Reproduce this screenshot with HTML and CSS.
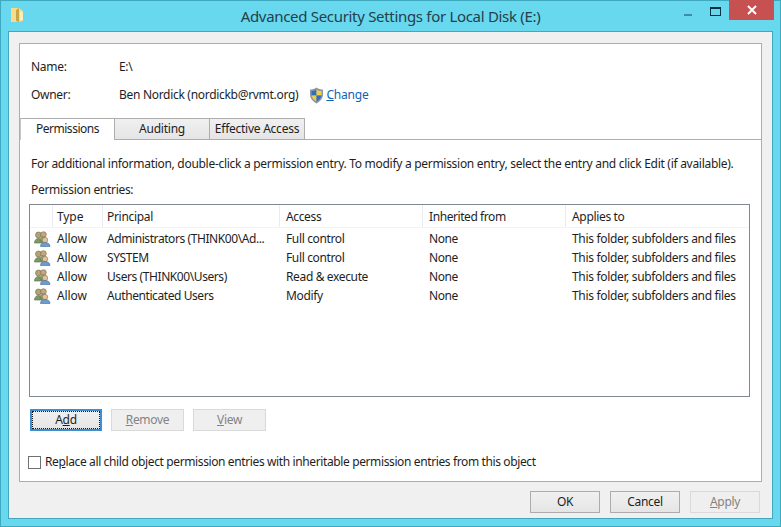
FILE: index.html
```html
<!DOCTYPE html>
<html lang="en">
<head>
<meta charset="utf-8">
<title>Advanced Security Settings for Local Disk (E:)</title>
<link rel="stylesheet" href="styles.css">
</head>
<body>
<div class="window">
  <header class="titlebar">
    <svg class="folder" width="14" height="16" viewBox="0 0 14 16"><path d="M1 1h8l4 3v10l-4 1H1z" fill="#f6dc8c"/><path d="M6 3l3-2v14l-3-1z" fill="#c9a545"/><path d="M10 5h3v8h-3z" fill="#fbeeb8"/></svg>
    <h1 class="title">Advanced Security Settings for Local Disk (E:)</h1>
    <div class="controls">
      <span class="min"></span>
      <span class="max"></span>
      <span class="close">
        <svg width="10" height="10" viewBox="0 0 10 10"><path d="M1 1l8 8M9 1l-8 8" stroke="#fff" stroke-width="2"/></svg>
      </span>
    </div>
  </header>
  <div class="client">
    <main class="panel">
      <div class="info">
        <div class="info-row"><span class="label">Name:</span><span>E:\</span></div>
        <div class="info-row">
          <span class="label">Owner:</span><span>Ben Nordick (nordickb@rvmt.org)</span>
          <svg class="shield" width="15" height="17" viewBox="0 0 15 17">
            <path d="M7.5 .5c2 1.500 4 2 6.500 2v5c0 4-3 7-6.500 9C4 14.500 1 11.500 1 7.500v-5c2.500 0 4.500-.5 6.500-2z" fill="#8a96a6"/>
            <path d="M7.500 2.500v6H2.500v-4.500c2 0 3.500-.5 5-1.500z" fill="#2d6fc4"/>
            <path d="M7.500 2.500c1.500 1 3 1.500 5 1.500v4.500h-5z" fill="#f2cf3c"/>
            <path d="M2.500 8.500h5v6c-2.500-1.500-4.500-3.500-5-6z" fill="#f2cf3c"/>
            <path d="M7.500 8.500h5c-.5 2.500-2.500 4.500-5 6z" fill="#2d6fc4"/>
          </svg>
          <a class="link" href="#"><u>C</u>hange</a>
        </div>
      </div>
      <nav class="tabs">
        <span class="tab active">Permissions</span>
        <span class="tab">Auditing</span>
        <span class="tab">Effective Access</span>
      </nav>
      <section class="body">
        <p class="help">For additional information, double-click a permission entry. To modify a permission entry, select the entry and click Edit (if available).</p>
        <p class="entries-label">Permission entries:</p>
        <div class="list">
          <div class="row head">
            <span class="c-icon"></span>
            <span class="c-type">Type</span>
            <span class="c-principal">Principal</span>
            <span class="c-access">Access</span>
            <span class="c-inherit">Inherited from</span>
            <span class="c-applies">Applies to</span>
          </div>
          <div class="row">
            <span class="c-icon"><svg class="users" width="17" height="16" viewBox="0 0 17 16"><use href="#users"/></svg></span>
            <span class="c-type">Allow</span><span class="c-principal">Administrators (THINK00\Ad...</span><span class="c-access">Full control</span><span class="c-inherit">None</span><span class="c-applies">This folder, subfolders and files</span>
          </div>
          <div class="row">
            <span class="c-icon"><svg class="users" width="17" height="16" viewBox="0 0 17 16"><use href="#users"/></svg></span>
            <span class="c-type">Allow</span><span class="c-principal">SYSTEM</span><span class="c-access">Full control</span><span class="c-inherit">None</span><span class="c-applies">This folder, subfolders and files</span>
          </div>
          <div class="row">
            <span class="c-icon"><svg class="users" width="17" height="16" viewBox="0 0 17 16"><use href="#users"/></svg></span>
            <span class="c-type">Allow</span><span class="c-principal">Users (THINK00\Users)</span><span class="c-access">Read &amp; execute</span><span class="c-inherit">None</span><span class="c-applies">This folder, subfolders and files</span>
          </div>
          <div class="row">
            <span class="c-icon"><svg class="users" width="17" height="16" viewBox="0 0 17 16"><use href="#users"/></svg></span>
            <span class="c-type">Allow</span><span class="c-principal">Authenticated Users</span><span class="c-access">Modify</span><span class="c-inherit">None</span><span class="c-applies">This folder, subfolders and files</span>
          </div>
        </div>
        <div class="list-actions">
          <button class="btn focus" type="button">A<u>d</u>d</button>
          <button class="btn disabled" type="button"><u>R</u>emove</button>
          <button class="btn disabled" type="button"><u>V</u>iew</button>
        </div>
        <label class="check"><span class="box"></span><span>Re<u>p</u>lace all child object permission entries with inheritable permission entries from this object</span></label>
      </section>
    </main>
    <footer class="footer">
      <button class="btn wide" type="button">OK</button>
      <button class="btn wide" type="button">Cancel</button>
      <button class="btn wide disabled" type="button"><u>A</u>pply</button>
    </footer>
  </div>
</div>
<svg class="defs" width="0" height="0">
  <defs>
    <g id="users">
      <circle cx="4.500" cy="4" r="3" fill="#b3a477" stroke="#6d6a3a" stroke-width=".6"/>
      <path d="M.5 12c0-3 2-4.500 4-4.500s4 1.500 4 4.500z" fill="#7d9a6d" stroke="#55683a" stroke-width=".6"/>
      <circle cx="9.500" cy="3.500" r="2.800" fill="#c4a87c" stroke="#7a6640" stroke-width=".6"/>
      <path d="M6 10c0-2.500 1.500-4 3.500-4s3 1.500 3 4z" fill="#8ea572" stroke="#60703c" stroke-width=".6"/>
      <circle cx="11" cy="9" r="2.700" fill="#e2c39a" stroke="#8a7250" stroke-width=".6"/>
      <path d="M6.500 15.500c0-3 2-4 4.500-4s5 1 5 4z" fill="#6f9dc9" stroke="#3f6a98" stroke-width=".6"/>
    </g>
  </defs>
</svg>
</body>
</html>
```
FILE: styles.css
```css
* { box-sizing: border-box; }
html, body { margin: 0; padding: 0; }
body {
  width: 781px;
  height: 527px;
  overflow: hidden;
  font-family: "Noto Sans", "Open Sans", sans-serif;
  font-size: 12px;
  line-height: 16px;
  color: #1e1e1e;
  letter-spacing: -0.3px;
}
.window {
  width: 781px;
  height: 527px;
  background: #68d8ef;
  border: 1px solid #3fa9c0;
  display: flex;
  flex-direction: column;
}
.titlebar {
  height: 30px;
  display: flex;
  align-items: center;
  position: relative;
  padding-left: 9px;
  flex: none;
}
.folder { margin-top: -2px; }
.title {
  position: absolute;
  left: 0;
  right: 0;
  top: 5px;
  margin: 0;
  text-align: center;
  font-size: 15px;
  font-weight: 400;
  line-height: 20px;
  color: #24404a;
  letter-spacing: -0.31px;
}
.controls {
  margin-left: auto;
  margin-right: 6px;
  align-self: flex-start;
  display: flex;
  align-items: flex-start;
}
.min {
  width: 8px;
  height: 2px;
  background: #3c8ea3;
  margin-top: 13px;
  margin-right: 18px;
}
.max {
  width: 11px;
  height: 9px;
  border: 1px solid #06323f;
  border-top-width: 2px;
  margin-top: 6px;
  margin-right: 8px;
}
.close {
  width: 45px;
  height: 20px;
  margin-top: -1px;
  background: #c75050;
  display: flex;
  align-items: center;
  justify-content: center;
}
.client {
  flex: 1;
  margin: 0 7px 7px;
  background: #f0f0f0;
  border: 1px solid #3fa9c0;
  padding: 11px 10px 0 10px;
  display: flex;
  flex-direction: column;
}
.panel {
  height: 439px;
  background: #fff;
  border: 1px solid #adadad;
  display: flex;
  flex-direction: column;
}
.info { padding: 15px 0 0 11px; height: 74px; }
.info-row { display: flex; align-items: center; height: 16px; margin-bottom: 12px; }
.label { width: 88px; }
.shield { margin-left: 11px; margin-right: 2px; }
.link { color: #0d63b3; text-decoration: none; letter-spacing: -0.2px; }
.link u { text-decoration: underline; }
.tabs { display: flex; height: 22px; border-bottom: 1px solid #adadad; flex: none; }
.tab {
  width: 95px;
  height: 21px;
  background: linear-gradient(#f0f0f0, #e5e5e5);
  border: 1px solid #adadad;
  border-left: none;
  border-bottom: none;
  text-align: center;
  line-height: 20px;
  letter-spacing: -0.22px;
}
.tab.active {
  background: #fff;
  height: 22px;
  border-left: 1px solid #c8c8c8;
  letter-spacing: -0.48px;
}
.tab:last-child { letter-spacing: -0.25px; }
.body { padding: 16px 0 0 11px; flex: 1; }
.help { margin: 0; height: 16px; white-space: nowrap; letter-spacing: -0.29px; }
.entries-label { margin: 10px 0 0 0; height: 16px; }
.list {
  margin: 6px 0 0 -2px;
  width: 721px;
  height: 193px;
  border: 1px solid #828790;
  background: #fff;
}
.row { display: flex; height: 19px; align-items: center; white-space: nowrap; }
.row.head { height: 23px; border-bottom: 1px solid #f0f3f8; margin-bottom: 1px; }
.row.head span { height: 22px; line-height: 24px; border-right: 1px solid #e8ecf2; }
.row.head span:last-child { border-right: none; }
.c-icon { width: 23px; flex: none; padding-left: 4px; display: flex; align-items: center; }
.c-type { width: 50px; flex: none; padding-left: 4px; letter-spacing: -0.1px; }
.c-principal { width: 177px; flex: none; padding-left: 4px; letter-spacing: -0.42px; }
.c-access { width: 143px; flex: none; padding-left: 6px; letter-spacing: -0.36px; }
.c-inherit { width: 143px; flex: none; padding-left: 6px; letter-spacing: -0.42px; }
.c-applies { flex: 1; padding-left: 6px; letter-spacing: -0.33px; }
.row.head .c-principal { letter-spacing: -0.3px; }
.list-actions { display: flex; gap: 9px; margin: 12px 0 0 -1px; }
.btn {
  width: 73px;
  height: 22px;
  padding: 0;
  font: inherit;
  letter-spacing: inherit;
  color: #1e1e1e;
  background: linear-gradient(#f0f0f0, #e5e5e5);
  border: 1px solid #acacac;
}
.btn.focus {
  width: 72px;
  border: 1px solid #3d8fd1;
  outline: 1px dotted #111;
  outline-offset: -3px;
  box-shadow: inset 0 0 0 1px #3d8fd1;
}
.btn.disabled { background: #efefef; border-color: #d9d9d9; color: #838383; }
.check { display: flex; align-items: center; gap: 3px; margin: 23px 0 0 -2px; white-space: nowrap; letter-spacing: -0.38px; }
.box { width: 13px; height: 13px; border: 1px solid #707070; background: #fff; flex: none; margin-left: -1px; margin-right: 1px; }
.footer { display: flex; justify-content: flex-end; gap: 10px; margin: 9px -9px 0 0; padding-right: 11px; }
.btn.wide { width: 70px; }
.defs { position: absolute; }
```
